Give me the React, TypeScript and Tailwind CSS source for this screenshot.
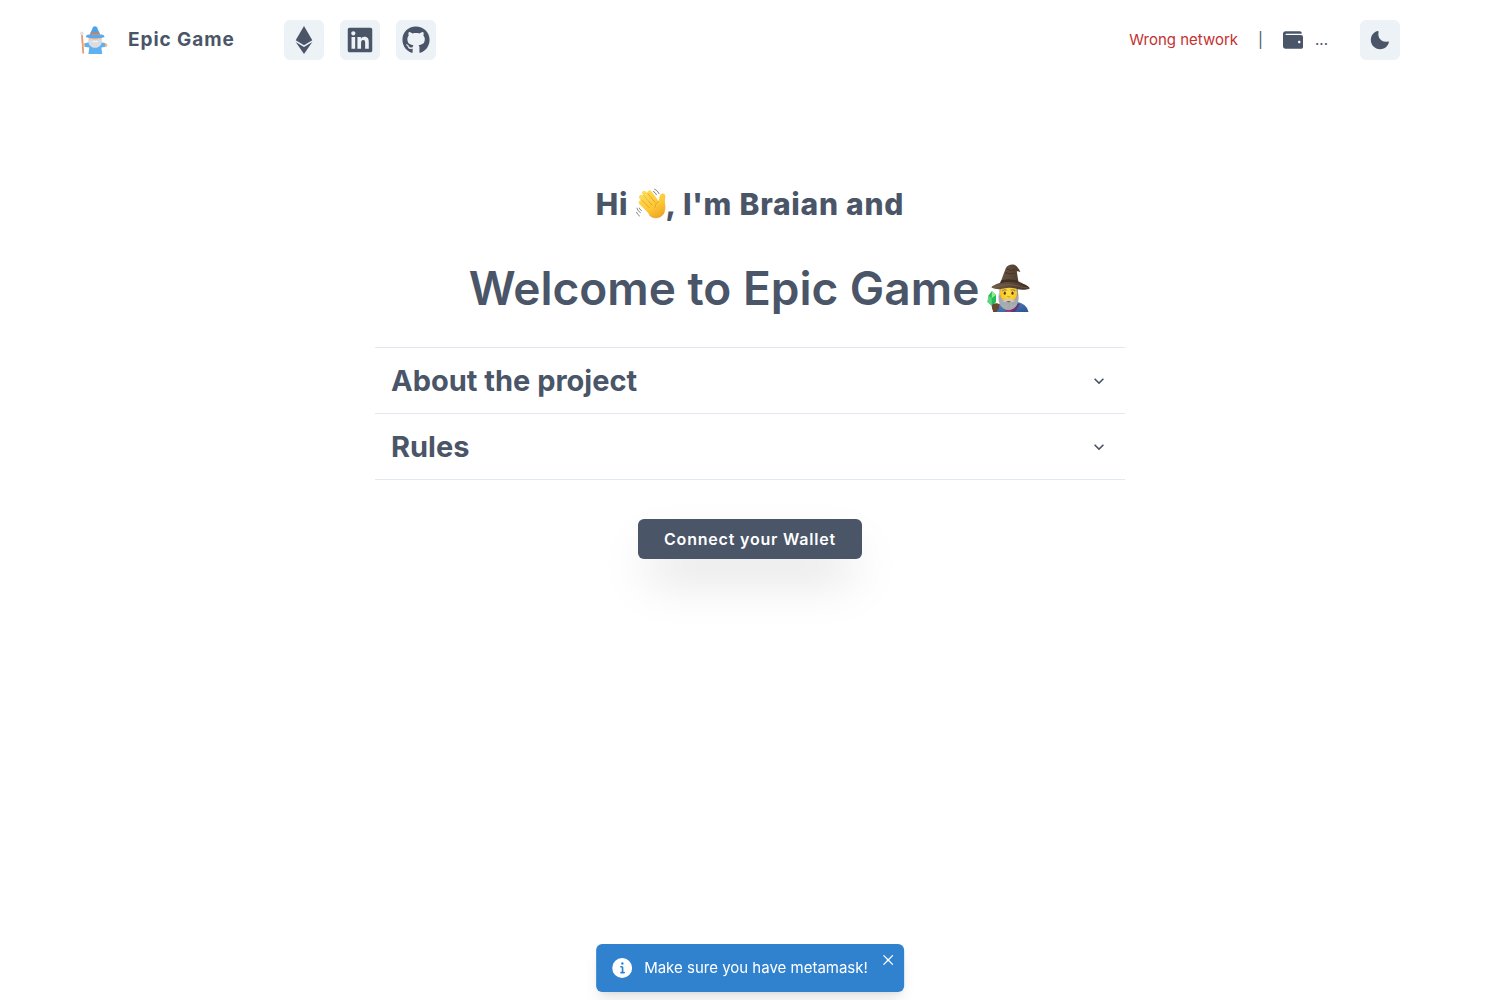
import { FaEthereum, FaGithub, FaLinkedin, FaWallet } from "react-icons/fa";

function WizardLogo() {
  return (
    <svg viewBox="0 0 28 28" className="h-7 w-7" aria-hidden="true">
      <path d="M1 8h1.8L4.2 27.5H2.4z" fill="#e39a70" />
      <circle cx="1.9" cy="7.3" r="1.9" fill="#dfe3e8" />
      <path d="M4.6 17.2l6.4-1.4h8.4l6.2 1.4v3.6l-4.2.6.8 6.6H8.4l.9-6.6-4.7-.6z" fill="#5fb1f0" />
      <path d="M2.4 17.4l2.6-.3v3.8l-2.6-.3zM25.2 17.1l1.6.6c1 .8.7 2.9-.4 3.1l-1.4-.1z" fill="#f7b48e" />
      <path d="M8.6 11h13v4.6H8.6z" fill="#f6c2a2" />
      <path d="M8.2 14.2c1.8-.2 2.8-1 3.4-2h7c.6 1 1.6 1.8 3.4 2 .2 4.3-2.7 7.6-6.9 7.6s-7-3.3-6.9-7.6z" fill="#dcdde2" />
      <path d="M12 12.2h6.2v2.3H12z" fill="#f6c2a2" />
      <path d="M11.8 15.4q1.8-1.6 3.3-.4 1.5-1.2 3.3.4-1.6 1.3-3.3.5-1.7.8-3.3-.5z" fill="#f3f3f5" />
      <path d="M9.8 8.4L13 1.2q1.7-2 3.9 0l3.2 7.2z" fill="#4ba2e8" />
      <path d="M10.8 6.4h8.4l1 2.4H9.8z" fill="#c9835f" />
      <path d="M6 11.2q-.3-3 3.6-2.7 5.5.6 11 0 4-.3 3.8 2.7-9.2 2.4-18.4 0z" fill="#5aaaea" />
    </svg>
  );
}

function WavingHand() {
  return (
    <svg viewBox="0 0 30 32" className="h-8 w-[30px] shrink-0" role="img" aria-label="waving hand">
      <defs>
        <linearGradient id="hand" gradientUnits="userSpaceOnUse" x1="6" y1="4" x2="22" y2="30">
          <stop offset="0" stopColor="#ffdc55" />
          <stop offset="0.6" stopColor="#fdc836" />
          <stop offset="1" stopColor="#efa724" />
        </linearGradient>
      </defs>
      <g fill="none" stroke="url(#hand)" strokeWidth="4.4" strokeLinecap="round">
        <path d="M4.9 14.6L13 22.5" />
        <path d="M5.2 9.2L15 19.5" />
        <path d="M8.2 5L18 16.5" />
        <path d="M13.6 4.6L21 14.5" />
      </g>
      <path
        d="M8.2 19.5L17 9.7l5.3 4c.9-1.2.7-3.3 1.3-5.2.5-1.9 1.9-3.2 3.6-2.9 1.8.4 2.5 2 2.1 4-.7 3.2-.4 5.2 0 7.7.6 5.4-1.7 10.1-5.8 11.8-3.8 1.5-7.6.5-10.4-2.6z"
        fill="url(#hand)"
      />
      <path d="M5.6 11.9l7.8 7.8M7.2 7.4l8.7 9.6M11.6 5.4l7.4 8.9M22.3 13.7c-2.1 1.1-3.2 3-3.2 5.5" fill="none" stroke="#dc941f" strokeWidth=".7" strokeLinecap="round" />
      <path d="M13.4 27.1c4.5 4.4 12 3.2 14.9-2.8" fill="none" stroke="#e8941d" strokeWidth=".8" />
      <g fill="none" stroke="#777" strokeWidth=".9" strokeLinecap="round">
        <path d="M17.3 3.4q2.3 1.1 3.2 3.3M18.6 1.1q3.4 1.4 4.5 4.6M.9 20.2q.8 3 3.4 4.4M.5 24.2q.8 2.6 3 3.8M3.3 20.1q.6 1.7 2.2 2.6" />
      </g>
    </svg>
  );
}

function WizardEmoji() {
  return (
    <svg viewBox="0 0 44 48" className="h-12 w-11 shrink-0" role="img" aria-label="wizard">
      <defs>
        <linearGradient id="hat" x1="0" y1="0" x2="1" y2="0">
          <stop offset="0" stopColor="#6e5946" />
          <stop offset="0.45" stopColor="#614b39" />
          <stop offset="1" stopColor="#3b2d23" />
        </linearGradient>
        <radialGradient id="face">
          <stop offset="0" stopColor="#ffe13f" />
          <stop offset="1" stopColor="#f9c322" />
        </radialGradient>
        <linearGradient id="robe" x1="0" y1="0" x2="1" y2="1">
          <stop offset="0" stopColor="#5e8fc9" />
          <stop offset="1" stopColor="#2b5292" />
        </linearGradient>
      </defs>
      <path d="M7 48q1-7 8-9.500l14-1q11 2 12.500 10.500z" fill="url(#robe)" />
      <path d="M15 41l5 7h8l5-8-4-1z" fill="#653575" />
      <path d="M4 38l2.200 10h3.600l.4-5" fill="#574332" />
      <path d="M1.500 31.500L5 27l4 4v7l-4 4-4.500-4z" fill="#26bb58" />
      <path d="M5 27l-.4 7.200L9 31z" fill="#8fec93" />
      <path d="M1.500 31.500l3.100 2.700L5 42l-4.500-4z" fill="#5cd67a" />
      <path d="M4.800 42.500c0-3 5.500-4.200 7.300-2.100 1 2.400-.8 6.400-3.200 7.100-2.200.1-4-2.400-4.100-5z" fill="#6b4930" />
      <path d="M12.500 23h18.500v13h-18.500z" fill="#8f9494" />
      <ellipse cx="21.500" cy="29" rx="8.600" ry="9.800" fill="url(#face)" />
      <path d="M12 29c.9 4.400 2.700 6.700 5.200 7 2-1.500 6.700-1.500 8.700 0 2.500-.3 4.300-2.600 5.200-7 2 8.500-1.500 14.700-6.300 16.500q-3.400 1.400-6.800 0C13.500 43.700 10.200 37.500 12 29z" fill="#a6aaac" />
      <path d="M15.200 37.200q5-3.600 6.300-2 1.400-1.600 6.500 2l-4.900 1.200H20z" fill="#c9cccf" />
      <path d="M19 37.500q2.600-1 5.200 0-2.600 1.900-5.200 0z" fill="#975625" />
      <path d="M15.500 40.500l2 2.500M19 41l.5 3.500M24.500 41l-.5 3.500M28 40.500L26 43" stroke="#b4b8ba" strokeWidth="1" />
      <path d="M18 46.200q3.500 1.300 7 0L23.500 48h-4z" fill="#c72c82" />
      <ellipse cx="17.800" cy="29.200" rx="1.100" ry="1.600" fill="#553718" />
      <ellipse cx="25.500" cy="29.200" rx="1.100" ry="1.600" fill="#553718" />
      <path d="M15.500 26.700q1.800-1.500 3.700-.6M24.200 26.100q2-.9 3.700.6" fill="none" stroke="#8d8578" strokeWidth="1.200" strokeLinecap="round" />
      <path d="M20.400 32.500q1.300 1 2.600 0" fill="none" stroke="#d88c13" />
      <path
        d="M4.500 23.600c0-2.300 6.500-3.900 9-5.200 1.800-4.600 3.200-9.200 5.300-14.200C20.100 1.400 23 .3 26 .5c3.200.2 5.500 3.500 7.400 7.400-1.600-.4-2.600-1-3.600-.6.5 3.200.9 6.900 1.600 10.300 2.800 1.300 11.300 4.600 11.300 6.800-5 2.200-9.400 1.600-14 .2-4.500-1.400-8.500-1-12.100 0-4.500 1-8.700.6-12.100-1z"
        fill="url(#hat)"
      />
      <path d="M14 16.600q8.500-2.800 17.200.3l.3 2.300q-9-2.600-18.400.1z" fill="#3f3026" />
      <path d="M19.400 4.800q4 2.500 8.500.9M18.200 8.700q4.800 2 9.500.4" fill="none" stroke="#46362a" strokeWidth="1" />
      <path d="M5.500 23.400q5.800-.5 10.500-2.200 8.500-1.600 15.400.8 5.200 2 10.300 2.100" fill="none" stroke="#786251" strokeWidth=".8" />
    </svg>
  );
}

function MoonIcon() {
  return (
    <svg viewBox="0 0 24 24" className="h-5 w-5" fill="currentColor" aria-hidden="true">
      <path d="M21.4,13.7C20.6,13.9,19.8,14,19,14c-5,0-9-4-9-9c0-0.8,0.1-1.6,0.3-2.4c0.1-0.3,0-0.7-0.3-1c-0.3-0.3-0.6-0.4-1-0.3C4.3,2.7,1,7.1,1,12c0,6.1,4.9,11,11,11c4.9,0,9.3-3.3,10.6-8.1c0.1-0.3,0-0.7-0.3-1C22.1,13.7,21.7,13.6,21.4,13.7z" />
    </svg>
  );
}

const links = [
  { label: "Etherscan", href: "#etherscan", Icon: FaEthereum },
  { label: "LinkedIn", href: "#linkedin", Icon: FaLinkedin },
  { label: "GitHub", href: "#github", Icon: FaGithub },
];

const sections = ["About the project", "Rules"];

export default function App() {
  return (
    <div className="flex min-h-screen flex-col bg-white font-['Inter',sans-serif] text-[15px] leading-6 text-[#4a5568]">
      <header className="flex h-20 items-center justify-between pr-[100px] pl-20">
        <div className="flex items-center">
          <WizardLogo />
          <span className="ml-5 text-[19px] leading-7 font-bold tracking-wider">Epic Game</span>
          <nav className="ml-[49px] flex gap-4">
            {links.map(({ label, href, Icon }) => (
              <a key={label} href={href} aria-label={label} className="flex h-10 w-10 items-center justify-center rounded-md bg-[#edf2f7]">
                <Icon size={28} />
              </a>
            ))}
          </nav>
        </div>
        <div className="flex items-center">
          <span className="text-[#c53030]">Wrong network</span>
          <span className="mx-5">|</span>
          <FaWallet size={20} />
          <span className="ml-3">...</span>
          <button type="button" aria-label="Toggle dark mode" className="ml-8 flex h-10 w-10 items-center justify-center rounded-md bg-[#edf2f7]">
            <MoonIcon />
          </button>
        </div>
      </header>

      <main className="mx-auto mt-[106px] flex w-1/2 flex-col items-center">
        <p className="flex items-center text-3xl font-extrabold tracking-wide whitespace-pre">
          <span>Hi </span>
          <WavingHand />
          <span>, I'm Braian and</span>
        </p>
        <h1 className="mt-9 flex items-center gap-2 text-[46px] leading-[60px] font-semibold whitespace-nowrap">
          <span>Welcome to Epic Game</span>
          <WizardEmoji />
        </h1>
        <div className="mt-[29px] w-full border-b border-[#e2e8f0]">
          {sections.map((title) => (
            <h2 key={title} className="border-t border-[#e2e8f0]">
              <button type="button" aria-expanded="false" className="flex h-[65px] w-full items-center justify-between px-4 text-left text-[29px] font-bold">
                {title}
                <svg viewBox="0 0 24 24" className="h-5 w-5" fill="currentColor" aria-hidden="true">
                  <path d="M16.59 8.59L12 13.17 7.41 8.59 6 10l6 6 6-6z" />
                </svg>
              </button>
            </h2>
          ))}
        </div>
        <button type="button" className="mt-[39px] h-10 rounded-md bg-[#4a5568] px-[26px] text-base font-semibold tracking-wider whitespace-nowrap text-white shadow-2xl">
          Connect your Wallet
        </button>
      </main>

      <div role="status" className="fixed bottom-2 left-1/2 flex h-12 -translate-x-1/2 items-center rounded-md bg-[#3182ce] pr-9 pl-4 whitespace-nowrap text-white shadow-lg">
        <svg viewBox="0 0 24 24" className="mr-3 h-5 w-5" fill="currentColor" aria-hidden="true">
          <path d="M12,0A12,12,0,1,0,24,12,12.013,12.013,0,0,0,12,0Zm.25,5a1.5,1.5,0,1,1-1.5,1.5A1.5,1.5,0,0,1,12.25,5ZM14.5,18.5h-4a1,1,0,0,1,0-2h.75a.25.25,0,0,0,.25-.25v-4.5a.25.25,0,0,0-.25-.25H10.5a1,1,0,0,1,0-2h1a2,2,0,0,1,2,2v4.75a.25.25,0,0,0,.25.25h.75a1,1,0,1,1,0,2Z" />
        </svg>
        Make sure you have metamask!
        <button type="button" aria-label="Close" className="absolute top-1 right-1 flex h-6 w-6 items-center justify-center">
          <svg viewBox="0 0 24 24" className="h-[10px] w-[10px]" fill="currentColor" aria-hidden="true">
            <path d="M.439,21.44a1.5,1.5,0,0,0,2.122,2.121L11.823,14.3a.25.25,0,0,1,.354,0l9.262,9.263a1.5,1.5,0,1,0,2.122-2.121L14.3,12.177a.25.25,0,0,1,0-.354l9.263-9.262A1.5,1.5,0,0,0,21.439.44L12.177,9.7a.25.25,0,0,1-.354,0L2.561.44A1.5,1.5,0,0,0,.439,2.561L9.7,11.823a.25.25,0,0,1,0,.354Z" />
          </svg>
        </button>
      </div>
    </div>
  );
}
